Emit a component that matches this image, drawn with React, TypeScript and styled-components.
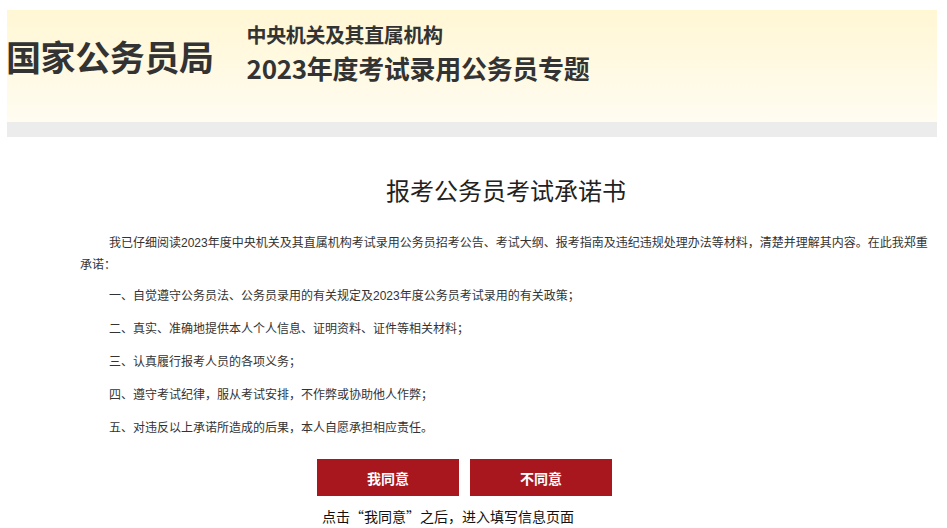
import styled, { createGlobalStyle } from "styled-components";

const GlobalStyle = createGlobalStyle`
  html, body {
    margin: 0;
    padding: 0;
    background: #fff;
  }
  body {
    font-family: "Liberation Sans", "Noto Sans CJK SC", sans-serif;
    color: #333;
  }
`;

const Page = styled.div`
  width: 930px;
  padding: 10px 0 0 7px;
`;

const Header = styled.header`
  height: 112px;
  display: flex;
  align-items: flex-start;
  background: linear-gradient(to bottom, #fff7d4, #fffcf1);
`;

const Logo = styled.h1`
  margin: 26px 0 0 -1px;
  font-family: "Noto Sans CJK SC", sans-serif;
  font-size: 35px;
  font-weight: 700;
  line-height: 40px;
  color: #333;
  letter-spacing: -0.4px;
`;

const HeaderTitles = styled.div`
  margin: 12px 0 0 33px;
  display: flex;
  flex-direction: column;
  font-family: "Noto Sans CJK SC", sans-serif;
  font-weight: 700;
  color: #333;
`;

const Org = styled.div`
  font-size: 20px;
  line-height: 26px;
  letter-spacing: -0.4px;
`;

const Topic = styled.div`
  margin-top: 3px;
  font-size: 26px;
  line-height: 34px;
  letter-spacing: -0.3px;
`;

const GreyBar = styled.div`
  height: 15px;
  background: #ececec;
`;

const Content = styled.main`
  padding: 0 5px 0 73px;
`;

const Title = styled.h2`
  margin: 38px 0 0;
  text-align: center;
  font-family: "Noto Sans CJK SC", serif;
  font-size: 24px;
  font-weight: 400;
  line-height: 30px;
  color: #222;
`;

const Intro = styled.p`
  margin: 27px 0 0;
  font-size: 12px;
  line-height: 22px;
  text-indent: 29px;
  color: #333;
`;

const Items = styled.div`
  margin-top: 9px;
  display: flex;
  flex-direction: column;
  gap: 11px;
`;

const Item = styled.p`
  margin: 0;
  padding-left: 29px;
  font-size: 12px;
  line-height: 22px;
  color: #333;
`;

const Actions = styled.div`
  margin-top: 20px;
  padding-left: 237px;
  display: flex;
  gap: 11px;
`;

const Button = styled.button`
  width: 142px;
  height: 37px;
  border: 0;
  padding: 0;
  background: #a8171e;
  color: #fff;
  font-family: "Noto Sans CJK SC", sans-serif;
  font-size: 14px;
  font-weight: 700;
  cursor: pointer;
`;

const Hint = styled.p`
  margin: 11px 0 0;
  padding-left: 242px;
  font-family: "Noto Sans CJK SC", sans-serif;
  font-size: 14px;
  line-height: 18px;
  color: #111;
`;

const promises = [
  "一、自觉遵守公务员法、公务员录用的有关规定及2023年度公务员考试录用的有关政策；",
  "二、真实、准确地提供本人个人信息、证明资料、证件等相关材料；",
  "三、认真履行报考人员的各项义务；",
  "四、遵守考试纪律，服从考试安排，不作弊或协助他人作弊；",
  "五、对违反以上承诺所造成的后果，本人自愿承担相应责任。",
];

const App = () => {
  return (
    <Page>
      <GlobalStyle />
      <Header>
        <Logo>国家公务员局</Logo>
        <HeaderTitles>
          <Org>中央机关及其直属机构</Org>
          <Topic>2023年度考试录用公务员专题</Topic>
        </HeaderTitles>
      </Header>
      <GreyBar />
      <Content>
        <Title>报考公务员考试承诺书</Title>
        <Intro>
          我已仔细阅读2023年度中央机关及其直属机构考试录用公务员招考公告、考试大纲、报考指南及违纪违规处理办法等材料，清楚并理解其内容。在此我郑重承诺：
        </Intro>
        <Items>
          {promises.map((p) => (
            <Item key={p}>{p}</Item>
          ))}
        </Items>
        <Actions>
          <Button>我同意</Button>
          <Button>不同意</Button>
        </Actions>
        <Hint>点击“我同意”之后，进入填写信息页面</Hint>
      </Content>
    </Page>
  );
};

export default App;
